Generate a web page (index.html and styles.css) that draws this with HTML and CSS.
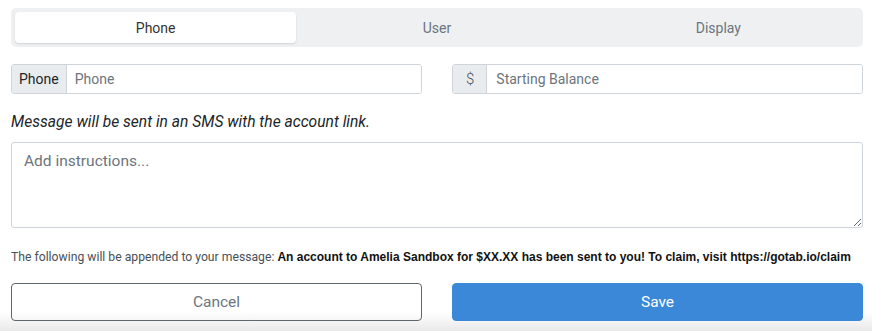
FILE: index.html
```html
<!DOCTYPE html>
<html lang="en">
<head>
    <meta charset="UTF-8">
    <meta name="viewport" content="width=device-width, initial-scale=1.0">
    <title>Send Account</title>
    <link rel="stylesheet" href="styles.css">
</head>
<body>
    <div class="container">
        <!-- Tabs -->
        <div class="tabs">
            <button class="tab active">Phone</button>
            <button class="tab">User</button>
            <button class="tab">Display</button>
        </div>

        <!-- Phone / balance -->
        <div class="row">
            <div class="input-group">
                <span class="addon">Phone</span>
                <input type="text" placeholder="Phone">
            </div>
            <div class="input-group">
                <span class="addon dollar">$</span>
                <input type="text" class="balance" placeholder="Starting Balance">
            </div>
        </div>

        <p class="note">Message will be sent in an SMS with the account link.</p>

        <textarea class="instructions" placeholder="Add instructions..."></textarea>

        <p class="appended">The following will be appended to your message: <strong>An account to Amelia Sandbox for $XX.XX has been sent to you! To claim, visit https://gotab.io/claim</strong></p>

        <div class="row buttons">
            <button class="btn btn-cancel">Cancel</button>
            <button class="btn btn-save">Save</button>
        </div>
    </div>
</body>
</html>
```

FILE: styles.css
```css
html {
    background: linear-gradient(to bottom, #fff 312px, #e9e9e9 331px) no-repeat;
    min-height: 100%;
}
body {
    margin: 0;
    padding: 0;
    font-family: Roboto, "Noto Sans", sans-serif;
    color: #212529;
}
.container {
    padding: 8px 9px 0 11px;
}
.tabs {
    display: flex;
    padding: 4px;
    height: 31px;
    background-color: #eef0f2;
    border-radius: 5px;
}
.tab {
    flex: 1;
    border: none;
    background: none;
    font-family: inherit;
    font-size: 14px;
    color: #6c757d;
    border-radius: 4px;
    cursor: pointer;
}
.tab.active {
    background-color: #fff;
    color: #333;
    box-shadow: 0 1px 2px rgba(0, 0, 0, 0.12);
}
.row {
    display: grid;
    grid-template-columns: 1fr 1fr;
    gap: 30px;
}
.tabs + .row {
    margin-top: 17px;
}
.input-group {
    display: flex;
    height: 30px;
    border: 1px solid #ced4da;
    border-radius: 3px;
    box-sizing: border-box;
    overflow: hidden;
}
.addon {
    display: flex;
    align-items: center;
    padding: 0 7px;
    background-color: #e9ecef;
    border-right: 1px solid #ced4da;
    font-size: 14px;
    color: #212529;
}
.addon.dollar {
    padding: 0 12px 0 13px;
    font-size: 15px;
    font-weight: 300;
    color: #495057;
}
.input-group input {
    flex: 1;
    border: none;
    outline: none;
    padding: 0 8px;
    font-family: inherit;
    font-size: 14px;
    color: #495057;
}
.input-group input.balance {
    padding-left: 9px;
}
.input-group input::placeholder {
    color: #6c757d;
}
.note {
    margin: 19px 0 0;
    font-size: 15.6px;
    font-style: italic;
    color: #212529;
    line-height: 18px;
}
.instructions {
    display: block;
    width: 100%;
    height: 86px;
    margin-top: 11px;
    box-sizing: border-box;
    border: 1px solid #ced4da;
    border-radius: 3px;
    padding: 9px 12px;
    font-family: inherit;
    font-size: 15.5px;
    resize: vertical;
}
.instructions::placeholder {
    color: #6c757d;
}
.appended {
    margin: 21px 0 0;
    font-size: 12.2px;
    line-height: 16px;
    color: #495057;
}
.appended strong {
    font-family: "Liberation Sans", Arial, sans-serif;
    font-size: 12px;
    color: #111;
}
.buttons {
    margin-top: 18px;
}
.btn {
    height: 38px;
    border-radius: 4px;
    font-family: inherit;
    font-size: 15.5px;
    cursor: pointer;
}
.btn-cancel {
    background: transparent;
    border: 1px solid #5f666d;
    color: #6c757d;
}
.btn-save {
    background-color: #3b88d9;
    border: 1px solid #3b88d9;
    color: #fff;
}
```
